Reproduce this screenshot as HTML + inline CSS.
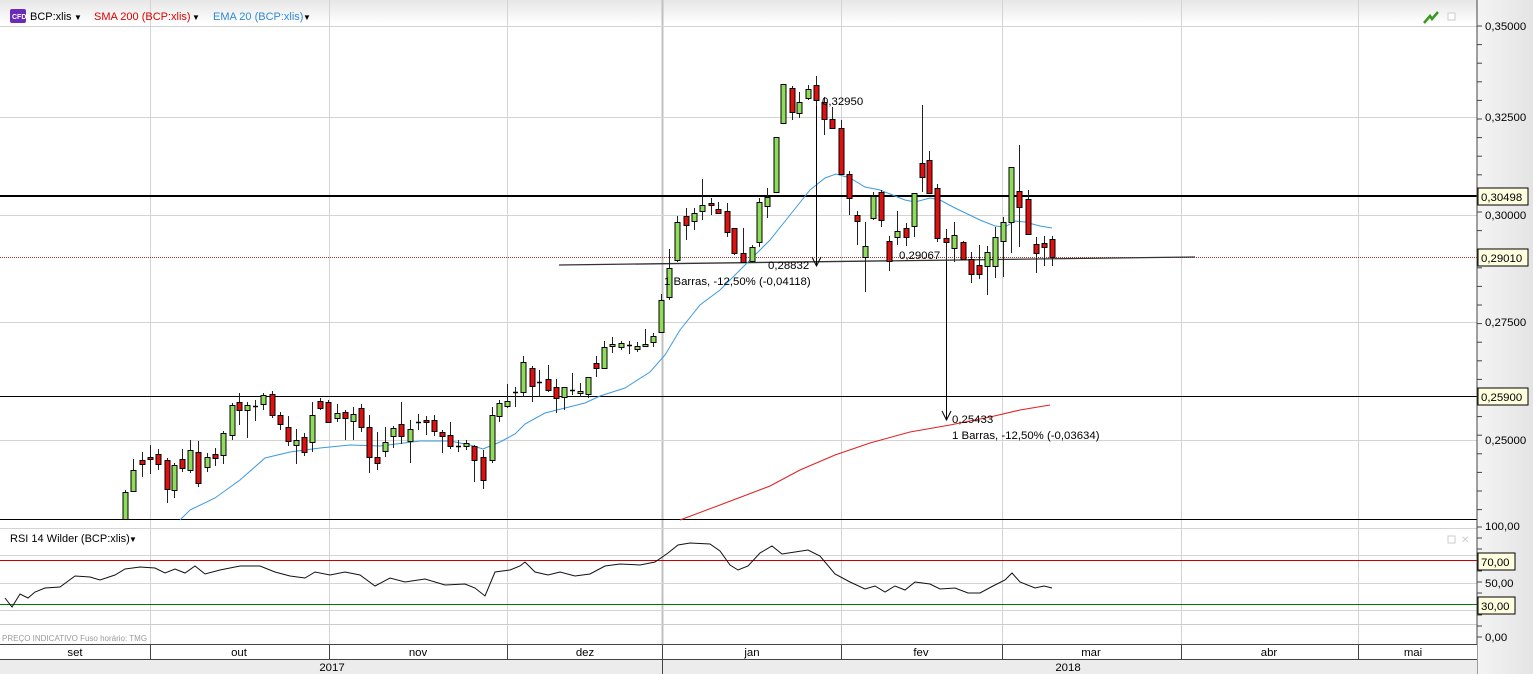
<!DOCTYPE html>
<html><head><meta charset="utf-8"><style>
html,body{margin:0;padding:0;width:1533px;height:674px;overflow:hidden;background:#fff;font-family:"Liberation Sans",sans-serif}
svg text{font-family:"Liberation Sans",sans-serif;font-size:11.4px}
svg text.h{font-size:11px}
</style></head><body>
<svg id="s" width="1533" height="674" xmlns="http://www.w3.org/2000/svg">
<defs>
<linearGradient id="hg" x1="0" y1="0" x2="0" y2="1"><stop offset="0" stop-color="#e6e6e6"/><stop offset="1" stop-color="#ffffff"/></linearGradient>
<linearGradient id="ag" x1="0" y1="0" x2="1" y2="0"><stop offset="0" stop-color="#f4f4f4"/><stop offset="1" stop-color="#e4e4e4"/></linearGradient>
</defs>
<rect x="0" y="0" width="1533" height="674" fill="#fff"/>
<rect x="0" y="0" width="1477" height="24" fill="url(#hg)"/>
<rect x="1477" y="0" width="56" height="674" fill="url(#ag)"/>
<g id="grid" stroke="#d4d4d4" stroke-width="1"></g>
<g id="lines"></g>
<g id="candles"></g>
<!-- header -->
<rect x="10" y="9" width="16" height="14" rx="2" fill="#6a2bb8"/>
<text x="12" y="19" fill="#fff" style="font-size:7px;font-weight:bold">CFD</text>
<text class="h" x="30" y="20" fill="#000">BCP:xlis</text><text x="74" y="20" style="font-size:8px">▼</text>
<text class="h" x="94" y="20" fill="#e00000">SMA 200 (BCP:xlis)</text><text x="192" y="20" style="font-size:8px">▼</text>
<text class="h" x="213" y="20" fill="#2e8ad8">EMA 20 (BCP:xlis)</text><text x="303" y="20" style="font-size:8px">▼</text>
<path d="M1424 23 L1430 16 L1432 19 L1438 12" stroke="#3a9a20" stroke-width="2.5" fill="none"/>
<rect x="1448" y="13" width="7" height="7" fill="#fff" stroke="#ccc"/>
<!-- annotations -->
<text x="822" y="105" fill="#000">0,32950</text>
<text x="768" y="269" fill="#000">0,28832</text>
<text x="664" y="285" fill="#000">1 Barras, -12,50% (-0,04118)</text>
<text x="899" y="259" fill="#000">0,29067</text>
<text x="952" y="423" fill="#000">0,25433</text>
<text x="952" y="439" fill="#000">1 Barras, -12,50% (-0,03634)</text>
<!-- right axis -->
<line x1="1477" y1="0" x2="1477" y2="674" stroke="#444"/>
<g id="ticks" stroke="#444"></g>
<g fill="#000">
<text x="1485" y="30">0,35000</text>
<text x="1485" y="121">0,32500</text>
<text x="1485" y="219">0,30000</text>
<text x="1485" y="326">0,27500</text>
<text x="1485" y="444">0,25000</text>
<text x="1485" y="530">100,00</text>
<text x="1485" y="587">50,00</text>
<text x="1485" y="641">0,00</text>
</g>
<rect x="1478" y="188" width="50" height="17" fill="#ffffe0" stroke="#000"/><text x="1481" y="201">0,30498</text>
<rect x="1478" y="249" width="50" height="17" fill="#ffffe0" stroke="#000"/><text x="1481" y="262">0,29010</text>
<rect x="1478" y="388" width="50" height="17" fill="#ffffe0" stroke="#000"/><text x="1481" y="401">0,25900</text>
<rect x="1478" y="553" width="37" height="17" fill="#ffffe0" stroke="#000"/><text x="1481" y="566">70,00</text>
<rect x="1478" y="597" width="37" height="17" fill="#ffffe0" stroke="#000"/><text x="1481" y="610">30,00</text>
<!-- RSI header -->
<text class="h" x="10" y="542" fill="#000">RSI 14 Wilder (BCP:xlis)</text><text x="129" y="542" style="font-size:8px">▼</text>
<rect x="1448" y="536" width="7" height="7" fill="#fff" stroke="#ccc"/>
<text x="1461" y="543" fill="#ccc" style="font-size:10px">✕</text>
<text x="2" y="641" fill="#999" style="font-size:8px">PREÇO INDICATIVO   Fuso horário: TMG</text>
<!-- time axis -->
<rect x="0" y="644" width="1477" height="15" fill="#fff"/>
<rect x="0" y="659" width="1477" height="15" fill="#ececec"/>
<line x1="0" y1="644.5" x2="1477" y2="644.5" stroke="#444"/>
<line x1="0" y1="659.5" x2="1477" y2="659.5" stroke="#444"/>
<g stroke="#444"><line x1="150.5" y1="644" x2="150.5" y2="659"/><line x1="329.5" y1="644" x2="329.5" y2="659"/><line x1="507.5" y1="644" x2="507.5" y2="659"/><line x1="662.5" y1="644" x2="662.5" y2="674"/><line x1="841.5" y1="644" x2="841.5" y2="659"/><line x1="1002.5" y1="644" x2="1002.5" y2="659"/><line x1="1181.5" y1="644" x2="1181.5" y2="659"/><line x1="1358.5" y1="644" x2="1358.5" y2="659"/></g>
<g fill="#000" text-anchor="middle">
<text x="75" y="656">set</text><text x="239" y="656">out</text><text x="418" y="656">nov</text><text x="585" y="656">dez</text><text x="752" y="656">jan</text><text x="921" y="656">fev</text><text x="1091" y="656">mar</text><text x="1269" y="656">abr</text><text x="1413" y="656">mai</text>
<text x="332" y="671">2017</text><text x="1068" y="671">2018</text>
</g>
</svg>
<script>
var NS="http://www.w3.org/2000/svg";
function el(p,t,a){var e=document.createElementNS(NS,t);for(var k in a)e.setAttribute(k,a[k]);document.getElementById(p).appendChild(e);return e;}
[150,329,507,841,1002,1181,1358].forEach(function(x){el('grid','line',{x1:x+.5,y1:0,x2:x+.5,y2:644});});
el('grid','line',{x1:662.5,y1:0,x2:662.5,y2:644,stroke:'#c0c0c0','stroke-width':2});
[26,117,215,322,440,528,555,583,610].forEach(function(y){el('grid','line',{x1:0,y1:y+.5,x2:1477,y2:y+.5});});
for(var y=26;y<519;y+=18.6){el('ticks','line',{x1:1477,y1:y,x2:1482,y2:y});}
for(var y=527;y<640;y+=11){el('ticks','line',{x1:1477,y1:y,x2:1482,y2:y});}
el('lines','line',{x1:0,y1:519.5,x2:1477,y2:519.5,stroke:'#000'});
el('lines','line',{x1:0,y1:196,x2:1477,y2:196,stroke:'#000','stroke-width':2});
el('lines','line',{x1:0,y1:396.5,x2:1477,y2:396.5,stroke:'#000'});
el('lines','line',{x1:0,y1:257.5,x2:1477,y2:257.5,stroke:'#a33','stroke-dasharray':'1,1'});
el('lines','line',{x1:559,y1:265,x2:1195,y2:257,stroke:'#333','stroke-width':1.3});
el('lines','line',{x1:0,y1:560.5,x2:1477,y2:560.5,stroke:'#c00'});
el('lines','line',{x1:0,y1:604.5,x2:1477,y2:604.5,stroke:'#070'});
el('lines','line',{x1:0,y1:624.5,x2:1477,y2:624.5,stroke:'#ccc'});
function pl(pts,c,w){el('lines','polyline',{points:pts.map(function(p){return p.join(',')}).join(' '),fill:'none',stroke:c,'stroke-width':w||1});}
pl([[180,520],[190,510],[215,498],[240,480],[265,458],[290,452],[320,448],[350,445],[380,446],[420,441],[450,441],[470,445],[483,449],[500,442],[515,434],[525,424],[545,413],[565,408],[585,403],[600,396],[625,388],[650,372],[665,355],[680,330],[700,305],[720,290],[745,265],[770,240],[790,215],[810,190],[825,178],[836,174],[850,178],[865,187],[880,190],[895,196],[905,200],[915,202],[930,198],[940,200],[955,208],[980,220],[995,226],[1005,227],[1015,221],[1025,222],[1040,226],[1052,228]],'#3c9ae0');
pl([[680,520],[720,505],[770,486],[800,470],[835,455],[870,443],[910,432],[950,425],[990,417],[1020,410],[1050,405]],'#e02020');
pl([[5,598],[12,607],[20,594],[28,598],[35,592],[45,588],[60,587],[75,576],[90,577],[100,580],[115,575],[125,569],[140,567],[155,568],[165,573],[175,569],[185,573],[195,566],[205,574],[220,570],[240,566],[260,566],[275,572],[290,576],[305,578],[315,572],[330,575],[345,572],[360,575],[375,586],[390,578],[405,582],[425,579],[445,585],[465,584],[475,588],[485,596],[495,572],[510,570],[520,566],[525,562],[535,572],[548,575],[560,572],[575,576],[590,574],[605,566],[620,564],[640,565],[655,562],[668,553],[678,545],[690,543],[710,544],[720,551],[730,565],[738,570],[748,566],[760,553],[772,546],[782,554],[795,552],[808,550],[820,556],[835,574],[850,582],[865,589],[875,586],[885,592],[895,586],[905,590],[915,582],[930,584],[940,589],[955,588],[968,593],[980,593],[993,586],[1005,580],[1012,573],[1020,582],[1035,588],[1044,586],[1052,588]],'#111');
el('lines','line',{x1:816.5,y1:85,x2:816.5,y2:266,stroke:'#000'});
pl([[812,257],[816.5,266],[821,257]],'#000');
el('lines','line',{x1:946.5,y1:240,x2:946.5,y2:420,stroke:'#000'});
pl([[942,411],[946.5,420],[951,411]],'#000');
var C=[[125,492,520,490,520,'g'],[133,470,491,459,492,'g'],[142,460,464,452,477,'r'],[150,457,459,445,474,'r'],[158,454,464,449,470,'r'],[167,460,489,458,503,'r'],[174,465,490,463,498,'g'],[182,459,468,449,472,'r'],[190,450,470,440,473,'g'],[198,452,483,441,487,'r'],[207,457,467,453,472,'g'],[215,454,458,448,466,'r'],[223,433,455,431,464,'g'],[232,405,435,403,440,'g'],[239,402,410,393,425,'r'],[247,405,410,402,438,'g'],[255,406,407,400,421,'d'],[263,395,404,393,410,'g'],[272,394,415,391,418,'r'],[280,415,424,412,430,'r'],[288,427,441,416,446,'r'],[296,440,445,429,464,'g'],[304,437,452,433,456,'r'],[312,415,442,402,452,'g'],[320,401,408,398,410,'r'],[328,402,422,400,423,'r'],[337,413,418,404,422,'g'],[345,412,418,410,440,'r'],[353,414,421,407,440,'g'],[361,408,427,404,432,'r'],[369,427,457,415,473,'r'],[377,457,463,432,470,'r'],[385,442,451,427,457,'g'],[393,428,436,426,448,'g'],[401,424,436,402,444,'r'],[410,429,441,420,463,'g'],[418,422,423,414,430,'d'],[426,420,422,416,435,'r'],[434,420,431,415,436,'r'],[442,432,436,430,453,'r'],[450,435,446,422,449,'r'],[458,446,447,440,452,'d'],[466,443,446,440,450,'g'],[474,446,460,445,482,'r'],[483,457,480,450,489,'r'],[492,415,460,407,463,'g'],[499,403,416,400,422,'g'],[507,401,406,384,408,'g'],[515,392,393,387,407,'d'],[523,362,392,356,397,'g'],[532,368,386,366,402,'r'],[539,382,383,370,397,'d'],[548,379,390,365,392,'r'],[556,387,398,379,413,'r'],[564,387,397,387,410,'g'],[572,390,392,373,395,'d'],[580,391,393,383,397,'g'],[588,377,394,377,398,'g'],[596,363,368,356,377,'r'],[604,347,368,341,368,'g'],[612,344,346,337,353,'g'],[621,343,347,341,350,'g'],[629,345,346,341,354,'d'],[637,346,349,342,352,'g'],[645,344,346,329,347,'g'],[653,336,342,333,347,'g'],[661,300,332,294,333,'g'],[669,268,297,249,300,'g'],[677,222,260,216,262,'g'],[686,216,225,208,240,'r'],[694,213,221,208,230,'g'],[702,205,211,179,220,'g'],[711,203,205,198,215,'r'],[718,209,213,202,214,'r'],[727,211,232,203,237,'r'],[734,228,253,228,255,'r'],[743,253,262,228,263,'r'],[752,247,261,245,262,'g'],[759,202,242,198,247,'g'],[767,197,206,188,218,'g'],[776,137,192,137,192,'g'],[783,84,123,84,123,'g'],[792,88,112,86,120,'r'],[799,102,113,92,118,'g'],[808,89,98,85,100,'g'],[816,85,100,76,106,'r'],[824,102,119,97,135,'r'],[832,119,128,107,128,'r'],[841,128,174,120,174,'r'],[849,174,198,171,215,'r'],[857,215,221,211,245,'r'],[865,246,257,222,292,'g'],[873,196,218,192,220,'g'],[881,192,220,190,227,'r'],[889,241,261,236,271,'r'],[897,231,237,211,245,'g'],[906,228,237,223,246,'r'],[914,193,226,193,237,'g'],[922,163,177,105,192,'r'],[929,160,193,151,194,'r'],[937,188,238,184,242,'r'],[946,238,242,229,262,'r'],[954,235,248,222,262,'g'],[963,242,259,241,260,'r'],[971,259,274,252,283,'r'],[979,265,274,245,279,'r'],[987,252,266,246,295,'g'],[995,237,266,227,278,'g'],[1003,222,241,217,277,'g'],[1011,167,222,167,253,'g'],[1019,191,207,145,247,'r'],[1028,199,234,190,234,'r'],[1036,244,253,237,273,'r'],[1044,243,247,236,266,'r'],[1052,239,257,236,266,'r']];
C.forEach(function(c){var x=c[0];
el('candles','line',{x1:x+.5,y1:c[3],x2:x+.5,y2:Math.min(c[4],519),stroke:'#222'});
var h=c[2]-c[1];
if(c[5]=='d'||h<1.5){el('candles','line',{x1:x-2,y1:c[1]+.5,x2:x+3,y2:c[1]+.5,stroke:'#000','stroke-width':1.5});return;}
el('candles','rect',{x:x-2,y:c[1]+.5,width:5,height:Math.min(c[2],519)-c[1],fill:c[5]=='g'?'#8fdc5a':'#e01010',stroke:'#000'});
});
</script>
</body></html>
